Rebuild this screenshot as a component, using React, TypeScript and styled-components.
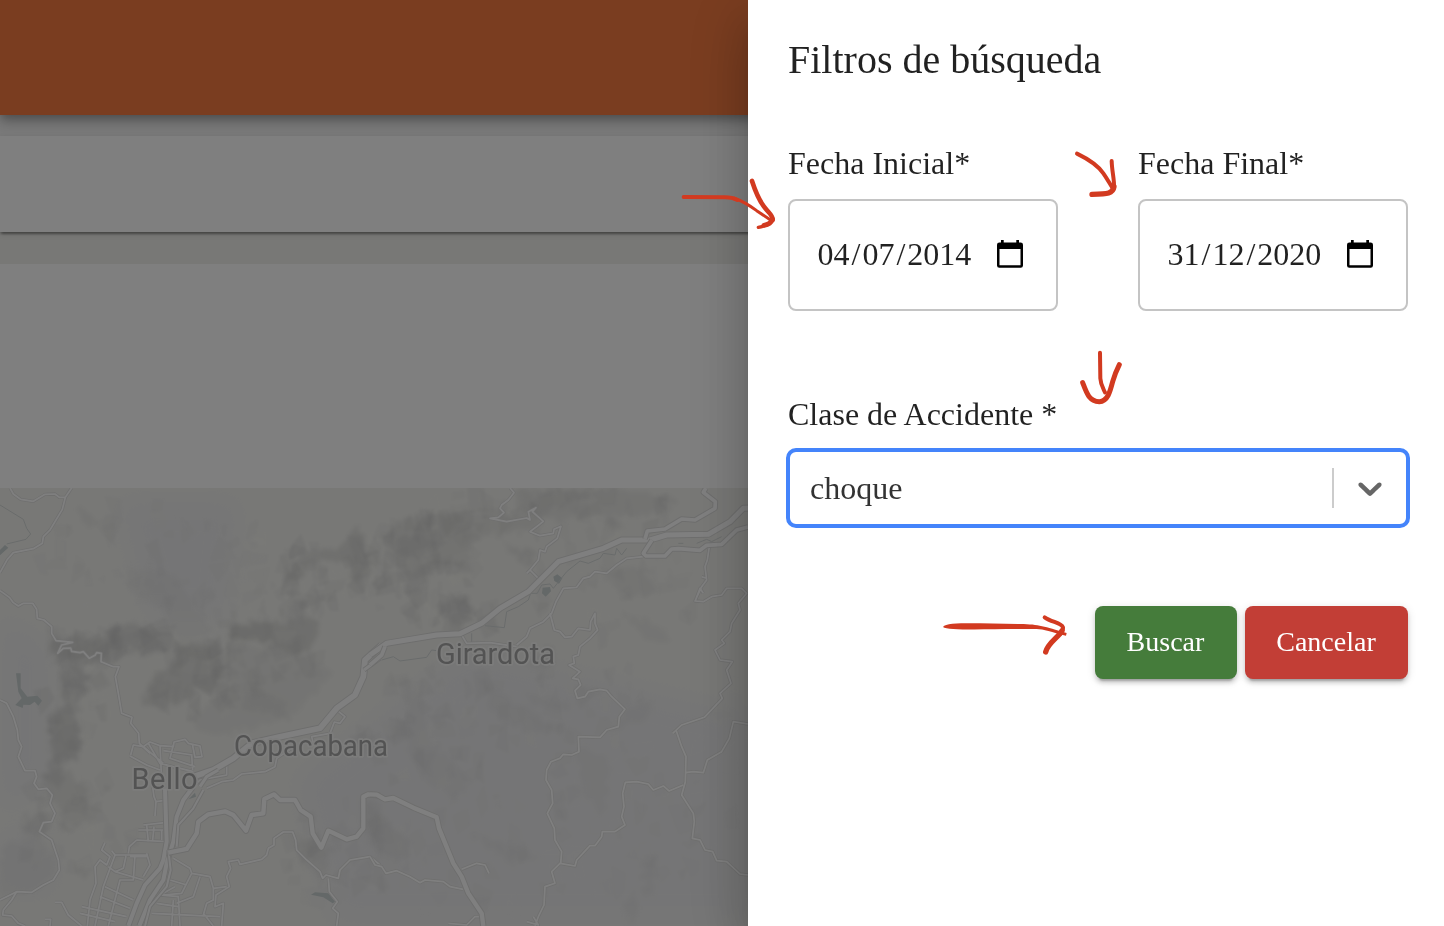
import React from 'react';
import styled, { createGlobalStyle } from 'styled-components';

const GlobalStyle = createGlobalStyle`
  *, *::before, *::after { box-sizing: border-box; }
  body {
    margin: 0;
    overflow: hidden;
    background: #f0f0ec;
    color: rgba(0, 0, 0, 0.87);
    font-family: 'Liberation Serif', 'Times New Roman', serif;
  }
`;

const Screen = styled.div`
  position: relative;
  width: 1444px;
  height: 926px;
  overflow: hidden;
`;

const Page = styled.div`
  display: flex;
  flex-direction: column;
  height: 100%;
  background: #f0f0ec;
  isolation: isolate;
`;

const AppBar = styled.header`
  position: relative;
  z-index: 1;
  flex: 0 0 115px;
  background: #f47a40;
  box-shadow: 0 4px 8px -2px rgba(0, 0, 0, 0.2), 0 8px 10px rgba(0, 0, 0, 0.14),
    0 2px 20px rgba(0, 0, 0, 0.12);
`;

const ToolbarArea = styled.section`
  flex: 0 0 117px;
  padding-top: 21px;
  background: #f3f3f3;
`;

const Toolbar = styled.div`
  position: relative;
  height: 96px;
  background: #fff;
  box-shadow: 0 4px 2px -2px rgba(0, 0, 0, 0.2), 0 2px 2px rgba(0, 0, 0, 0.2),
    0 2px 6px rgba(0, 0, 0, 0.12);
`;

const Summary = styled.section`
  flex: 0 0 224px;
  margin-top: 32px;
  background: #fff;
`;

const MapSvg = styled.svg`
  display: block;
  flex: 0 0 438px;
  width: 748px;
`;

const Backdrop = styled.div`
  position: absolute;
  inset: 0;
  display: flex;
  justify-content: flex-end;
  background: rgba(0, 0, 0, 0.5);
`;

const Drawer = styled.aside`
  width: 696px;
  height: 100%;
  padding: 32px 36px 0 40px;
  background: #fff;
  box-shadow: 0 16px 20px -10px rgba(0, 0, 0, 0.2), 0 32px 48px 4px rgba(0, 0, 0, 0.14),
    0 12px 60px 10px rgba(0, 0, 0, 0.12);
`;

const Title = styled.h2`
  margin: 0;
  font-size: 40px;
  font-weight: 400;
  line-height: 56px;
`;

const DateRow = styled.div`
  display: grid;
  grid-template-columns: 270px 270px;
  column-gap: 80px;
  margin-top: 51px;
`;

const Label = styled.label`
  display: block;
  height: 48px;
  font-size: 32px;
  line-height: 48px;
  white-space: nowrap;
`;

const DateBox = styled.div`
  display: flex;
  align-items: center;
  justify-content: space-between;
  height: 112px;
  margin-top: 12px;
  padding: 0 33px 2px 27px;
  border: 2px solid #c4c4c4;
  border-radius: 8px;
  font-size: 32px;
  line-height: 40px;
`;

const DateParts = styled.span`
  display: flex;
`;

const DatePart = styled.span`
  padding: 0 2px;
  &:first-child { padding-left: 0.5px; }
`;

const CalendarSvg = styled.svg`
  width: 26px;
  height: 28px;
`;

const SelectField = styled.div`
  margin-top: 79px;
`;

const SelectControl = styled.div`
  display: flex;
  align-items: center;
  height: 80px;
  margin: 10px -2px 0;
  border: 4px solid #4484fb;
  border-radius: 10px;
`;

const SelectValue = styled.span`
  flex: 1;
  padding: 0 0 1px 20px;
  color: #333;
  font-size: 32px;
  line-height: 40px;
`;

const Separator = styled.span`
  width: 2px;
  height: 40px;
  background: #ccc;
`;

const Indicator = styled.span`
  display: flex;
  padding: 16px;
  svg { width: 40px; height: 40px; fill: #666; }
`;

const Actions = styled.div`
  display: flex;
  justify-content: flex-end;
  gap: 8px;
  margin-top: 78px;
`;

const Button = styled.button<{ $color: string; $width: number }>`
  width: ${(p) => p.$width}px;
  height: 73px;
  padding: 0 1px 2px 0;
  border: 0;
  border-radius: 8px;
  background: ${(p) => p.$color};
  color: #fff;
  font: 400 28px/49px 'Liberation Serif', 'Times New Roman', serif;
  box-shadow: 0 6px 2px -4px rgba(0, 0, 0, 0.2), 0 4px 4px rgba(0, 0, 0, 0.14),
    0 2px 10px rgba(0, 0, 0, 0.12);
`;

const Annotations = styled.svg`
  position: absolute;
  inset: 0;
  pointer-events: none;
`;

const westShades: [string, number][] = [
  ['M155 480L210 465L320 478L345 435L400 425L455 455L500 510L440 525L400 520L340 545L270 530L220 540L265 590L260 640L235 650L240 790L235 830L190 850L180 935L130 890L160 820L145 720L180 680L190 590L160 530Z', 0.4],
  ['M335 440L400 428L445 455L500 512L420 520L385 485L320 520Z', 0.35],
  ['M160 490L310 475L320 510L290 545L160 525Z', 0.3],
  ['M190 580L265 590L255 630L185 650Z', 0.35],
  ['M145 710L215 670L245 790L230 830L150 850Z', 0.3],
  ['M540 490L640 500L655 460L670 580L640 640L600 630L560 660L480 690L430 660L460 580L510 570Z', 0.45],
  ['M540 490L650 480L665 520L600 540L520 560Z', 0.3],
  ['M690 440L760 425L850 428L940 410L960 470L890 535L810 490L690 475Z', 0.5],
  ['M690 440L820 428L815 485L690 475Z', 0.3],
  ['M850 300L900 220L1025 200L1075 130L1110 280L1060 310L1040 240L960 245L900 290L855 320Z', 0.45],
  ['M875 360L915 350L915 420L870 440Z', 0.4],
  ['M690 490L900 520L1000 580L860 720L640 770L560 720L640 660Z', 0.18],
  ['M380 260L520 280L640 460L540 480L480 380L390 330Z', 0.13],
  ['M720 640L760 625L850 660L860 710L740 690Z', 0.25],
  ['M130 890L190 860L260 930L270 1030L170 1050L200 1000L150 950Z', 0.3],
  ['M80 1020L120 995L150 1030L120 1070L70 1060Z', 0.35],
  ['M0 1100L120 1060L180 1160L100 1240L0 1240Z', 0.15],
  ['M235 1175L275 1165L260 1195Z', 0.4],
  ['M1080 950L1140 1000L1140 1100L1090 1050Z', 0.2],
  ['M880 1060L1000 1110L970 1190L900 1150Z', 0.2],
  ['M240 70L290 120L270 150L240 110Z', 0.2],
];

const eastShades: [string, number][] = [
  ['M30 170L110 110L270 95L460 110L520 30L680 30L520 100L500 150L330 170L280 250L200 260L160 310L80 270Z', 0.3],
  ['M75 180L155 160L205 155L200 200L145 240L85 220Z', 0.4],
  ['M200 380L290 345L320 400L280 410L270 440L235 420Z', 0.4],
  ['M205 110L265 105L240 190Z', 0.3],
  ['M100 280L170 250L160 310L120 360Z', 0.35],
  ['M260 240L310 230L300 260L260 290Z', 0.35],
  ['M400 190L500 220L490 260L430 230Z', 0.35],
  ['M450 30L780 30L920 60L880 100L560 120L440 90Z', 0.25],
  ['M710 110L740 115L765 145L720 150Z', 0.35],
  ['M100 590L150 650L180 780L300 900L260 960L180 910L120 830Z', 0.13],
  ['M350 620L500 700L540 760L460 750L360 690Z', 0.15],
  ['M460 640L600 670L590 690L500 680Z', 0.15],
  ['M470 720L600 740L570 760Z', 0.15],
  ['M680 260L820 270L860 340L760 350Z', 0.2],
  ['M760 400L860 430L910 490L830 480Z', 0.18],
  ['M620 800L720 840L700 1000L640 940Z', 0.12],
  ['M820 1140L860 1130L850 1240L820 1250Z', 0.14],
  ['M760 1280L790 1240L810 1290L770 1330Z', 0.14],
  ['M0 950L60 1040L120 1090L90 1150L0 1090Z', 0.2],
  ['M300 1060L520 1130L420 1150Z', 0.14],
  ['M760 690L850 660L830 720L750 740Z', 0.14],
];

const westRoads = [
  'M30 24L40 42L62 58L100 64L135 43L165 42L178 52L196 52L215 24',
  'M196 52L187 88L150 150L130 170L127 190L100 206L40 218L22 238L0 278',
  'M0 332L28 352L40 368L55 378L70 370L98 370L110 388L112 415L132 420L155 440L155 460L168 482L218 487L185 495L173 520L190 505L212 504L215 514L240 518L250 515L268 535L285 526L290 518L304 520L303 545L340 560L357 560L346 590L355 640L365 700L396 712L392 730L416 760L418 790L450 820',
  'M0 660L20 670L40 710L52 750L55 780L65 800L55 830L75 872L105 872L110 890L102 910L115 928L140 925L157 945L150 970L165 1000L155 1025L130 1028L118 1055L155 1080L175 1140L178 1170L160 1200L130 1215L95 1237L50 1235L0 1260',
  'M50 1235L35 1260L10 1290L8 1305L35 1308L55 1330L75 1338',
  'M165 1267L185 1267L205 1305L245 1338M135 1318L152 1318L150 1338',
  'M392 825L400 795L430 800L450 786L480 797L520 800L522 786L555 778L565 790L600 798L606 830L585 832L577 792M390 828L440 855L480 870M430 800L490 850M445 790L480 850L580 875M480 797L485 900M520 795L510 835L585 860M490 812L577 825M575 825L578 870',
  'M455 900L462 950L468 965L490 962M468 965L465 1008',
  'M430 1035L495 1028M440 1035L445 1085M410 1080L500 1085M415 1050L490 1050M462 1040L458 1080M485 1050L485 1080M410 1080L388 1100L385 1120',
  'M315 1088L305 1110L330 1130L320 1155L300 1140L285 1160L288 1210L270 1260L262 1338M335 1112L345 1125L440 1125M345 1125L310 1220L285 1338M378 1128L370 1165L345 1175L325 1160M405 1125L400 1200L360 1200L325 1338M315 1220L400 1260M300 1250L390 1285M245 1280L380 1310M240 1300L345 1325M345 1175L430 1200M440 1120L450 1155L430 1190M390 1130L440 1130',
  'M520 1135L570 1165L575 1180L630 1190L640 1225L680 1220M575 1180L545 1240L490 1245M600 1190L580 1250L530 1270M510 1200L560 1215M525 1220L480 1245L535 1250L540 1338M470 1270L535 1280M455 1300L660 1310M520 1260L515 1338M610 1305L620 1270L640 1260L640 1225M610 1300L640 1338',
  'M665 1338L670 1270L645 1280L648 1245L688 1220L680 1190L692 1165L685 1145L715 1140L720 1153L785 1138L800 1125L805 1105L822 1095L822 1075L850 1056L878 1056L887 1080L890 1110L920 1140L960 1175L968 1195L978 1185L1015 1195L1020 1170L1050 1140L1110 1130L1140 1155',
  'M985 1195L988 1235L1012 1265L998 1285L1015 1300L1010 1338',
  'M620 925L665 905L700 900L725 882L795 875L825 860L830 835L885 798M680 850L680 885L600 900L580 920',
  'M1010 690L1035 710L1020 730L1003 726L990 760L935 770L940 790',
];

const eastRoads = [
  'M420 24L432 38L415 60L395 75L390 85L402 98L385 112L360 115L410 125L470 114L480 120L475 95L498 83L487 95L520 124L500 140L480 155L510 167L550 160L552 148L573 139L562 175L530 200L525 215L510 210L505 240L480 270L505 295M480 270L470 280',
  'M440 495L470 470L480 445L520 425L545 400L558 365L580 325L620 322L640 295L660 290L675 275L710 280L740 255L770 235L820 230',
  'M540 400L553 450L570 455L585 472L605 470L625 445L660 450L662 425L675 400L675 430L683 450L660 475L630 500L625 525L610 530L613 550L597 555L630 575L608 595L625 598L632 615L615 632L622 655L645 650L655 635L690 628L710 632L725 650L765 688L748 710L745 740L710 750L690 772L625 770L627 815L605 825L580 823L570 835L543 845L530 870L528 900L545 930L548 970L532 1000L553 1045L555 1080L575 1115L572 1150',
  'M1018 200L1012 240L1005 260L1010 300L995 320L975 363L1000 365L1025 350L1055 345L1070 325L1115 325L1130 340L1105 370L1110 390L1085 430L1080 455L1055 480L1063 490L1035 510L1050 540L1087 545L1070 570L1083 610L1050 640L1057 655L1003 712L935 735L908 760M995 290L1010 295M975 365L990 325L1000 340',
  'M918 750L935 800L948 830L946 905L935 945L970 1000L973 1025L967 1075L990 1080L1005 1110L1028 1115L1040 1142L1070 1145L1110 1182L1134 1185',
  'M946 878L970 875L1000 878L1012 840L1055 815L1078 775L1090 725L1134 732',
  'M940 915L897 933L880 918L850 930L835 912L800 905L766 907L758 940L762 980L755 1010L765 1035L735 1055L697 1055L695 1070L675 1097L660 1097L620 1140L615 1158L570 1150L545 1175L555 1210L525 1220L522 1275L505 1310L495 1338M490 1310L505 1335L470 1325',
  'M275 1168L320 1150L345 1155L357 1180',
  'M0 1130L15 1155L35 1160L48 1180L80 1172L120 1190L150 1208L165 1200L220 1205L240 1220L280 1228M235 1330L290 1335L315 1310L330 1310',
  'M275 465L290 490L360 488L440 500',
];

/* Relief areas of the terrain: centre x, centre y, radius x, radius y, facet count, strength. */
const reliefAreas: [number, number, number, number, number, number][] = [
  [75, 700, 30, 65, 32, 0.13],
  [85, 645, 40, 18, 20, 0.14],
  [140, 635, 32, 14, 14, 0.14],
  [200, 680, 50, 38, 42, 0.13],
  [265, 650, 60, 45, 50, 0.1],
  [330, 575, 60, 35, 42, 0.13],
  [420, 570, 60, 55, 70, 0.14],
  [460, 615, 35, 20, 20, 0.14],
  [560, 510, 140, 30, 60, 0.12],
  [620, 590, 90, 50, 45, 0.08],
  [430, 730, 80, 60, 60, 0.08],
  [540, 700, 90, 60, 40, 0.07],
  [640, 780, 100, 120, 70, 0.06],
  [350, 850, 70, 50, 40, 0.08],
  [70, 820, 70, 50, 40, 0.09],
  [170, 560, 130, 60, 70, 0.06],
  [480, 850, 120, 60, 50, 0.05],
];

function createRandom(seed: number) {
  let state = seed;
  return () => {
    state = (state * 16807) % 2147483647;
    return state / 2147483647;
  };
}

const random = createRandom(4127);

const facets = reliefAreas.flatMap(([cx, cy, rx, ry, count, strength]) =>
  Array.from({ length: count }, () => {
    const angle = random() * Math.PI * 2;
    const reach = Math.sqrt(random());
    const x = cx + Math.cos(angle) * reach * rx;
    const y = cy + Math.sin(angle) * reach * ry;
    const size = 6 + random() * 11;
    const corners = [0, 1, 2, 3].map((i) => {
      const turn = (i + random() * 0.8) * (Math.PI / 2);
      const px = x + Math.cos(turn) * size * (0.4 + random() * 0.7);
      const py = y + Math.sin(turn) * size * (0.5 + random() * 0.9);
      return `${px.toFixed(1)} ${py.toFixed(1)}`;
    });
    const light = random() > 0.68;
    return {
      d: `M${corners.join('L')}Z`,
      fill: light ? '#f4f4ee' : '#c0c0c0',
      opacity: Number((strength * (0.5 + random())).toFixed(3)),
    };
  }),
);

const App: React.FC = () => (
  <>
    <GlobalStyle />
    <Screen>
      <Page>
        <AppBar />
        <ToolbarArea>
          <Toolbar />
        </ToolbarArea>
        <Summary />
        <ValleyMap />
      </Page>
      <Backdrop>
        <Drawer>
          <Title>Filtros de búsqueda</Title>
          <DateRow>
            <DateField label="Fecha Inicial*" parts={['04', '07', '2014']} />
            <DateField label="Fecha Final*" parts={['31', '12', '2020']} />
          </DateRow>
          <SelectField>
            <Label>Clase de Accidente *</Label>
            <SelectControl>
              <SelectValue>choque</SelectValue>
              <Separator />
              <Indicator>
                <svg viewBox="0 0 20 20" aria-hidden="true">
                  <path d="M4.516 7.548c0.436-0.446 1.043-0.481 1.576 0l3.908 3.747 3.908-3.747c0.533-0.481 1.141-0.446 1.574 0 0.436 0.445 0.408 1.197 0 1.615-0.406 0.418-4.695 4.502-4.695 4.502-0.217 0.223-0.502 0.335-0.787 0.335s-0.57-0.112-0.789-0.335c0 0-4.287-4.084-4.695-4.502s-0.436-1.17 0-1.615z" />
                </svg>
              </Indicator>
            </SelectControl>
          </SelectField>
          <Actions>
            <Button $color="#457c3b" $width={142}>Buscar</Button>
            <Button $color="#c23e36" $width={163}>Cancelar</Button>
          </Actions>
        </Drawer>
      </Backdrop>
      <HandArrows />
    </Screen>
  </>
);

function DateField({ label, parts }: { label: string; parts: string[] }) {
  return (
    <div>
      <Label>{label}</Label>
      <DateBox>
        <DateParts>
          <DatePart>{parts[0]}</DatePart>/<DatePart>{parts[1]}</DatePart>/<DatePart>{parts[2]}</DatePart>
        </DateParts>
        <CalendarSvg viewBox="0 0 26 28" aria-hidden="true">
          <path
            fillRule="evenodd"
            d="M4 0H6.7V2.4H19.3V0H22V2.4H23.6Q26 2.4 26 4.8V25.4Q26 27.8 23.6 27.8H2.4Q0 27.8 0 25.4V4.8Q0 2.4 2.4 2.4H4ZM2.5 9V25.3H23.5V9Z"
          />
        </CalendarSvg>
      </DateBox>
    </div>
  );
}

function Roads({ paths }: { paths: string[] }) {
  return (
    <>
      {paths.map((d) => <path key={d} d={d} stroke="#dededd" strokeWidth="10" />)}
      {paths.map((d) => <path key={d} d={d} stroke="#ffffff" strokeWidth="5" />)}
    </>
  );
}

function Highway({ d, width }: { d: string; width: number }) {
  return (
    <>
      <path d={d} stroke="#dcdcdb" strokeWidth={width + 6} />
      <path d={d} stroke="#ffffff" strokeWidth={width} />
    </>
  );
}

function ValleyMap() {
  return (
    <MapSvg viewBox="0 488 748 438">
      <defs>
        <filter id="rugged" x="-10%" y="-10%" width="120%" height="120%">
          <feTurbulence type="fractalNoise" baseFrequency="0.05" numOctaves="1" seed="8" result="noise" />
          <feDisplacementMap in="SourceGraphic" in2="noise" scale="50" xChannelSelector="R" yChannelSelector="G" />
          <feGaussianBlur stdDeviation="6" />
        </filter>
        <filter id="wide" x="-50%" y="-50%" width="200%" height="200%">
          <feGaussianBlur stdDeviation="40" />
        </filter>
        <filter id="facetEdge">
          <feGaussianBlur stdDeviation="0.8" />
        </filter>
      </defs>
      <rect x="0" y="488" width="748" height="438" fill="#f1f1ed" />
      <g transform="translate(0 480) scale(.33333)" fill="#ebebec" filter="url(#wide)">
        <path d="M350 60L720 60L680 420L450 420ZM0 400L150 500L150 900L0 1000ZM880 900L1400 500L2250 700L2250 1338L1000 1338ZM0 1060L160 1060L160 1240L0 1240Z" />
      </g>
      <g transform="translate(0 480) scale(.33333)" fill="#c9c9c8" filter="url(#rugged)">
        {westShades.map(([d, opacity]) => <path key={d} d={d} opacity={opacity} />)}
      </g>
      <g transform="translate(370 480) scale(.33333)" fill="#c9c9c8" filter="url(#rugged)">
        {eastShades.map(([d, opacity]) => <path key={d} d={d} opacity={opacity} />)}
      </g>
      <g filter="url(#facetEdge)">
        {facets.map(({ d, fill, opacity }) => <path key={d} d={d} fill={fill} opacity={opacity} />)}
      </g>
      <g transform="translate(0 480) scale(.33333)" fill="#c8d0d0">
        <path d="M48 580L62 580L62 625L82 650L112 647L126 662L115 677L104 665L90 675L70 674L68 684L46 675L65 655L55 635Z" />
        <path d="M0 210L15 195L25 203L0 226ZM933 1244L945 1237L985 1240L1005 1265L998 1270L970 1252ZM566 958L585 938L588 950Z" />
      </g>
      <g transform="translate(370 480) scale(.33333)" fill="#c8d0d0">
        <path d="M550 290L562 283L577 295L567 311L553 303ZM518 323L540 321L543 334L527 350L516 340Z" />
      </g>
      <g fill="none" strokeLinejoin="round">
        <g transform="translate(0 480) scale(.33333)">
          <path d="M0 75L70 118L80 145L92 162L78 178L20 192" stroke="#d3d7d6" strokeWidth="3" />
          <Roads paths={westRoads} />
          <Highway width={12} d="M495 925L500 1085L490 1140L480 1165L435 1215L410 1270L385 1338M580 920L550 960L530 1010L520 1085L500 1150L490 1200L450 1260L418 1338" />
          <Highway width={6} d="M610 930L580 985L535 1035L530 1100M505 1110L512 1170L500 1220L450 1280L435 1338" />
          <Highway width={13} d="M505 1118L560 1107L590 1060L595 1025L625 1003L675 994L700 1005L738 1052L755 1005L790 1000L793 957L822 943L840 960L885 960L902 990L932 1010L938 1060L964 1103L985 1052L1040 1078L1070 1070L1090 1045L1090 950L1105 943L1140 947" />
          <Highway width={17} d="M580 890L640 870L700 835L755 790L840 770L960 745L1010 685L1065 645L1090 590L1095 540L1145 495" />
          <Highway width={9} d="M600 920L620 890L655 870M1092 570L1140 535" />
        </g>
        <g transform="translate(370 480) scale(.33333)">
          <path d="M35 540L70 530L90 543L170 532L185 510L200 512M345 437L403 443L410 395L445 380L475 360L482 340L502 340L515 315L540 312L550 325L590 275L630 243L655 250L690 235L700 220L735 225L740 205L755 225L770 205M925 190L940 190M980 190L1010 178L1025 185L1055 170M305 460L305 490" stroke="#d3d7d7" strokeWidth="3" />
          <Roads paths={eastRoads} />
          <Highway width={15} d="M0 525L50 490L200 465L270 461L335 430L390 385L475 335L565 245L700 205L755 180L840 180L890 165L1015 163L1080 125L1120 85L1140 84" />
          <Highway width={11} d="M0 555L35 525L45 500M1008 24L1000 37L1036 65L1035 85L975 120L935 117L885 147L832 153L825 177M846 180L820 220L828 228L885 228L905 207L925 206L990 211L1010 196L1055 193L1100 150L1134 141" />
          <Highway width={13} d="M0 943L20 944L45 958L70 954L130 983L200 1012L207 1045L250 1150L275 1190L295 1240L335 1300L340 1338" />
        </g>
      </g>
      <g
        fill="#a6a6a6"
        stroke="#f8f8f7"
        strokeWidth="3.5"
        strokeLinejoin="round"
        paintOrder="stroke"
        fontFamily="Roboto, sans-serif"
        fontSize="29"
      >
        <text x="131.5" y="788.5" textLength="66">Bello</text>
        <text x="234" y="756" textLength="154" lengthAdjust="spacingAndGlyphs">Copacabana</text>
        <text x="436" y="663.5" textLength="119">Girardota</text>
      </g>
    </MapSvg>
  );
}

function HandArrows() {
  return (
    <Annotations width="1444" height="926" viewBox="0 0 1444 926" aria-hidden="true">
      <g fill="none" stroke="#d23a20" strokeLinecap="round" strokeLinejoin="round">
        <g transform="translate(660 90) scale(.33333)">
          <path d="M71 321L190 322Q215 321 232 330" strokeWidth="12" />
          <path d="M222 324Q255 336 290 362L336 393" strokeWidth="9" />
          <path d="M276 273C286 304 297 330 312 350S340 377 338 390" strokeWidth="14" />
          <path d="M338 388Q336 404 295 412" strokeWidth="10" />
          <path d="M336 390Q332 402 312 406" strokeWidth="15" />
        </g>
        <g transform="translate(1040 130) scale(.33333)">
          <path d="M111 71C146 88 176 110 190 130S208 160 218 174" strokeWidth="12" />
          <path d="M215 93C216 125 223 148 222 170" strokeWidth="12" />
          <path d="M222 170C219 191 204 192 156 193" strokeWidth="16" />
          <path d="M180 668L181 745C182 765 190 776 195 787" strokeWidth="12" />
          <path d="M128 758C140 790 147 813 178 815C203 814 210 786 218 755Q225 730 238 704" strokeWidth="15" />
        </g>
        <g transform="translate(930 590) scale(.33333)">
          <path stroke="none" fill="#d23a20" d="M39 111C47 99 90 100 150 100L270 102C330 103 340 109 410 129L408 137C365 127 340 117 320 117C180 117 55 123 39 111Z" />
          <path d="M344 82C365 97 394 98 399 112Q400 122 390 132" strokeWidth="12" />
          <path d="M396 122C387 141 354 158 347 186" strokeWidth="16" />
        </g>
      </g>
    </Annotations>
  );
}

export default App;
